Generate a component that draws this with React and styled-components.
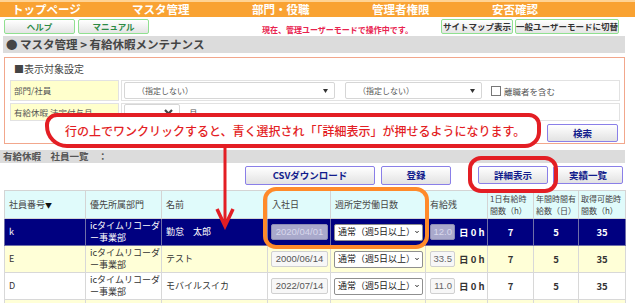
import React from 'react';
import styled, { createGlobalStyle } from 'styled-components';

const GlobalStyle = createGlobalStyle`
  html, body {
    margin: 0;
    overflow: hidden;
    background: #fff;
  }
  body {
    font-family: "Noto Sans CJK JP", "Noto Sans", sans-serif;
  }
`;

const navItems = ['トップページ', 'マスタ管理', '部門・役職', '管理者権限', '安否確認'];

const rows = [
  { id: 'k', name: '勤怠　太郎', date: '2020/04/01', rest: '12.0', tone: 'selected' },
  { id: 'E', name: 'テスト', date: '2000/06/14', rest: '33.5', tone: 'yellow' },
  { id: 'D', name: 'モバイルスイカ', date: '2022/07/14', rest: '11.0', tone: 'white' },
];

const rowBg = { selected: '#000080', yellow: '#FFFFD7', white: '#FFFFFF' };

const Page = styled.div`
  position: relative;
  width: 635px;
  height: 303px;
  overflow: hidden;
  color: #333;
`;

const NavBar = styled.nav`
  display: flex;
  height: 15px;
  padding-left: 12px;
  background: #F9A232;
  border-top: 2px solid #FFD394;
`;

const NavItem = styled.div`
  width: 120px;
  font-size: 11.5px;
  font-weight: bold;
  color: #fff;
  line-height: 15px;
`;

const SubBar = styled.div`
  display: flex;
  align-items: center;
  height: 19px;
  padding-left: 4px;
`;

const SmallButton = styled.div`
  box-sizing: border-box;
  width: ${(p) => p.$w}px;
  height: 15px;
  margin-left: ${(p) => p.$ml || 0}px;
  border: 1px solid #90E090;
  border-radius: 2px;
  background: linear-gradient(#ffffff, #e4e4e4);
  color: ${(p) => p.$color};
  font-size: 8.5px;
  font-weight: bold;
  text-align: center;
  line-height: 13px;
  white-space: nowrap;
`;

const Notice = styled.div`
  width: 179px;
  margin-left: 113px;
  padding-top: 6px;
  color: #E8234F;
  font-size: 8px;
  font-weight: bold;
  white-space: nowrap;
`;

const Crumb = styled.div`
  margin: 0 10px 0 3px;
  height: 17px;
  padding-left: 3px;
  background: #DCDCDC;
  color: #454545;
  font-size: 11.5px;
  font-weight: bold;
  line-height: 17px;
  white-space: pre;
`;

const Panel = styled.section`
  margin: 4px 10px 0 4px;
  height: 85px;
  padding: 0 4px 0 5px;
  border: 1px solid #F2A78C;
`;

const PanelTitle = styled.div`
  height: 22px;
  padding-left: 4px;
  font-size: 10px;
  line-height: 21px;
  color: #444;
`;

const FormRow = styled.div`
  display: grid;
  grid-template-columns: 109px 1fr;
  gap: 2px;
  height: ${(p) => p.$h}px;
  margin-bottom: 2px;
`;

const Label = styled.div`
  border: 1px solid #E2E2E2;
  background: #FFFFCC;
  padding-left: 3px;
  font-size: 8.5px;
  line-height: ${(p) => p.$lh}px;
  color: #555;
`;

const Cell = styled.div`
  display: flex;
  align-items: center;
  border: 1px solid #E2E2E2;
  padding-left: 2px;
  font-size: 8.5px;
  color: #555;
`;

const FormSelect = styled.div`
  box-sizing: border-box;
  display: flex;
  align-items: center;
  justify-content: space-between;
  width: ${(p) => p.$w}px;
  height: ${(p) => p.$h}px;
  margin-right: ${(p) => p.$mr || 0}px;
  padding: 0 6px 0 12px;
  border: 1px solid #D6D6D6;
  border-radius: 2px;
  background: #fff;
  color: #555;
  font-size: 8px;
`;

const Check = styled.span`
  display: inline-block;
  width: 8px;
  height: 8px;
  margin-right: 3px;
  border: 1px solid #777;
  background: #fff;
`;

const SearchRow = styled.div`
  display: flex;
  justify-content: flex-end;
  padding-top: 1px;
  padding-right: 2px;
`;

const BlueButton = styled.div`
  box-sizing: border-box;
  width: ${(p) => p.$w}px;
  height: ${(p) => p.$h || 18}px;
  margin-left: ${(p) => p.$ml || 0}px;
  border: 1px solid #8A7FE8;
  border-radius: 2px;
  background: linear-gradient(#ffffff, #e2e2e2);
  color: #121C8C;
  font-size: 9.5px;
  font-weight: bold;
  text-align: center;
  line-height: ${(p) => (p.$h || 18) - 2}px;
  white-space: nowrap;
`;

const ListBar = styled.div`
  margin: 6px 10px 0 0;
  height: 13px;
  padding-left: 3px;
  background: #DCDCDC;
  color: #555;
  font-size: 9.5px;
  font-weight: bold;
  line-height: 13px;
  white-space: pre;
`;

const ButtonRow = styled.div`
  display: flex;
  margin-top: 3px;
  padding-left: 245px;
  height: 19px;
`;

const Table = styled.table`
  margin: 5px 0 0 4px;
  width: 621px;
  border-collapse: collapse;
  table-layout: fixed;
  font-size: 9px;
`;

const Th = styled.th`
  height: 27px;
  padding: 0 ${(p) => (p.$tight ? 2 : 4)}px;
  border: 1px solid #D4D4D4;
  background: #E0FBFB;
  color: #444;
  font-weight: normal;
  font-size: ${(p) => (p.$tight ? 8 : 9)}px;
  text-align: left;
  line-height: 12px;
  white-space: nowrap;
  overflow: hidden;
`;

const SortMark = styled.span`
  font-size: 7px;
  color: #111;
`;

const Td = styled.td`
  height: 26px;
  padding: 0 4px;
  border: 1px solid ${(p) => (p.$tone === 'selected' ? '#6F6FA8' : '#D8D8D8')};
  background: ${(p) => rowBg[p.$tone]};
  color: ${(p) => (p.$tone === 'selected' ? '#fff' : '#333')};
  text-align: ${(p) => (p.$center ? 'center' : 'left')};
  font-weight: ${(p) => (p.$bold ? 'bold' : 'normal')};
  font-size: ${(p) => (p.$bold ? '9.5px' : '9px')};
  line-height: 12px;
  white-space: nowrap;
`;

const DateBox = styled.span`
  box-sizing: border-box;
  display: inline-block;
  width: 57px;
  height: 16px;
  margin-left: -1px;
  border: 1px solid ${(p) => (p.$sel ? '#8C8CB4' : '#D0D0D0')};
  border-radius: 2px;
  background: ${(p) => (p.$sel ? '#A9A9CB' : '#F7F7F7')};
  color: ${(p) => (p.$sel ? '#D8D8EC' : '#555')};
  font-family: "Liberation Sans", Arial, sans-serif;
  font-size: 9.5px;
  line-height: 14px;
  text-align: center;
`;

const RowSelect = styled.span`
  box-sizing: border-box;
  display: inline-flex;
  align-items: center;
  justify-content: space-between;
  width: 89px;
  height: 17px;
  margin-left: -1px;
  padding: 0 3px 0 3px;
  border: 1px solid #8F8F8F;
  border-radius: 2px;
  background: #fff;
  color: #222;
  font-size: 9px;
`;

const RestBox = styled.span`
  box-sizing: border-box;
  display: inline-block;
  width: 25px;
  height: 16px;
  margin-right: 4px;
  padding-right: 2px;
  border: 1px solid ${(p) => (p.$sel ? '#8C8CB4' : '#D0D0D0')};
  border-radius: 2px;
  background: ${(p) => (p.$sel ? '#A9A9CB' : '#F7F7F7')};
  color: ${(p) => (p.$sel ? '#D8D8EC' : '#666')};
  font-family: "Liberation Sans", Arial, sans-serif;
  font-size: 9.5px;
  line-height: 14px;
  text-align: right;
  vertical-align: middle;
`;

const RestUnit = styled.span`
  font-weight: bold;
  font-size: 9.5px;
  vertical-align: middle;
`;

const Callout = styled.div`
  position: absolute;
  left: 45px;
  top: 113px;
  box-sizing: border-box;
  width: 496px;
  height: 35px;
  display: flex;
  align-items: center;
  padding-left: 16px;
  border: 4px solid #E31E24;
  border-radius: 12px 12px 16px 22px;
  background: #fff;
  color: #E31E24;
  font-size: 12px;
  font-weight: 500;
  white-space: nowrap;
`;

const Highlight = styled.div`
  position: absolute;
  left: ${(p) => p.$x}px;
  top: ${(p) => p.$y}px;
  box-sizing: border-box;
  width: ${(p) => p.$w}px;
  height: ${(p) => p.$h}px;
  border: 4px solid ${(p) => p.$color};
  border-radius: 13px;
`;

const Arrow = styled.svg`
  position: absolute;
  left: 214px;
  top: 146px;
`;

const Chevron = ({ color = '#111', w = 9, sw = 2.2 }) => (
  <svg width={w} height="6" viewBox="0 0 9 6">
    <polyline points="1,1 4.5,4.6 8,1" fill="none" stroke={color} strokeWidth={sw} />
  </svg>
);

const Tri = () => (
  <svg width="5" height="4" viewBox="0 0 5 4">
    <polygon points="0,0 5,0 2.5,4" fill="#333" />
  </svg>
);

const App = () => {
  return (
    <Page>
      <GlobalStyle />
      <NavBar>
        {navItems.map((item) => (
          <NavItem key={item}>{item}</NavItem>
        ))}
      </NavBar>

      <SubBar>
        <SmallButton $w={71} $color="#2C8A45">ヘルプ</SmallButton>
        <SmallButton $w={71} $ml={3} $color="#2C8A45">マニュアル</SmallButton>
        <Notice>現在、管理ユーザーモードで操作中です。</Notice>
        <SmallButton $w={72} $color="#333">サイトマップ表示</SmallButton>
        <SmallButton $w={104} $ml={2} $color="#333">一般ユーザーモードに切替</SmallButton>
      </SubBar>

      <Crumb>{'● マスタ管理 > 有給休暇メンテナンス'}</Crumb>

      <Panel>
        <PanelTitle>■表示対象設定</PanelTitle>
        <FormRow $h={21}>
          <Label $lh={19}>部門/社員</Label>
          <Cell>
            <FormSelect $w={211} $h={17} $mr={10}>
              <span>（指定しない）</span>
              <Tri />
            </FormSelect>
            <FormSelect $w={137} $h={17} $mr={9}>
              <span>（指定しない）</span>
              <Tri />
            </FormSelect>
            <Check />
            離職者を含む
          </Cell>
        </FormRow>
        <FormRow $h={18}>
          <Label $lh={16}>有給休暇 法定付与月</Label>
          <Cell>
            <FormSelect $w={56} $h={16} $mr={9}>
              <span />
              <Chevron color="#444" />
            </FormSelect>
            月
          </Cell>
        </FormRow>
        <SearchRow>
          <BlueButton $w={71}>検索</BlueButton>
        </SearchRow>
      </Panel>

      <ListBar>{'有給休暇　社員一覧　：'}</ListBar>

      <ButtonRow>
        <BlueButton $w={130} $h={19}>CSVダウンロード</BlueButton>
        <BlueButton $w={70} $h={19} $ml={6}>登録</BlueButton>
        <BlueButton $w={70} $h={18} $ml={27}>詳細表示</BlueButton>
        <BlueButton $w={70} $h={18} $ml={5}>実績一覧</BlueButton>
      </ButtonRow>

      <Table>
        <colgroup>
          <col style={{ width: 81 }} />
          <col style={{ width: 76 }} />
          <col style={{ width: 106 }} />
          <col style={{ width: 63 }} />
          <col style={{ width: 95 }} />
          <col style={{ width: 62 }} />
          <col style={{ width: 46 }} />
          <col style={{ width: 45 }} />
          <col style={{ width: 47 }} />
        </colgroup>
        <thead>
          <tr>
            <Th>社員番号<SortMark>▼</SortMark></Th>
            <Th>優先所属部門</Th>
            <Th>名前</Th>
            <Th>入社日</Th>
            <Th>週所定労働日数</Th>
            <Th>有給残</Th>
            <Th $tight>1日有給時<br />間数（h）</Th>
            <Th $tight>年間時間有<br />給数（日）</Th>
            <Th $tight>取得可能時<br />間数（h）</Th>
          </tr>
        </thead>
        <tbody>
          {rows.map((r) => {
            const sel = r.tone === 'selected';
            return (
              <tr key={r.id}>
                <Td $tone={r.tone}>{r.id}</Td>
                <Td $tone={r.tone}>
                  icタイムリコーダ
                  <br />
                  ー事業部
                </Td>
                <Td $tone={r.tone}>{r.name}</Td>
                <Td $tone={r.tone}>
                  <DateBox $sel={sel}>{r.date}</DateBox>
                </Td>
                <Td $tone={r.tone}>
                  <RowSelect>
                    <span>通常（週5日以上）</span>
                    <Chevron />
                  </RowSelect>
                </Td>
                <Td $tone={r.tone}>
                  <RestBox $sel={sel}>{r.rest}</RestBox>
                  <RestUnit>日 0 h</RestUnit>
                </Td>
                <Td $tone={r.tone} $center $bold>7</Td>
                <Td $tone={r.tone} $center $bold>5</Td>
                <Td $tone={r.tone} $center $bold>35</Td>
              </tr>
            );
          })}
          <tr>
            {Array.from({ length: 9 }).map((_, i) => (
              <Td key={i} $tone="yellow" />
            ))}
          </tr>
        </tbody>
      </Table>

      <Callout>行の上でワンクリックすると、青く選択され「「詳細表示」が押せるようになります。</Callout>
      <Arrow width="22" height="84" viewBox="0 0 22 84">
        <line x1="11" y1="0" x2="11" y2="80" stroke="#E31E24" strokeWidth="3" />
        <polyline points="3,63 11,80 19,63" fill="none" stroke="#E31E24" strokeWidth="3.5" />
      </Arrow>
      <Highlight $x={263} $y={187} $w={166} $h={62} $color="#FF8A2A" />
      <Highlight $x={468} $y={156} $w={90} $h={37} $color="#E31E24" />
    </Page>
  );
};

export default App;
